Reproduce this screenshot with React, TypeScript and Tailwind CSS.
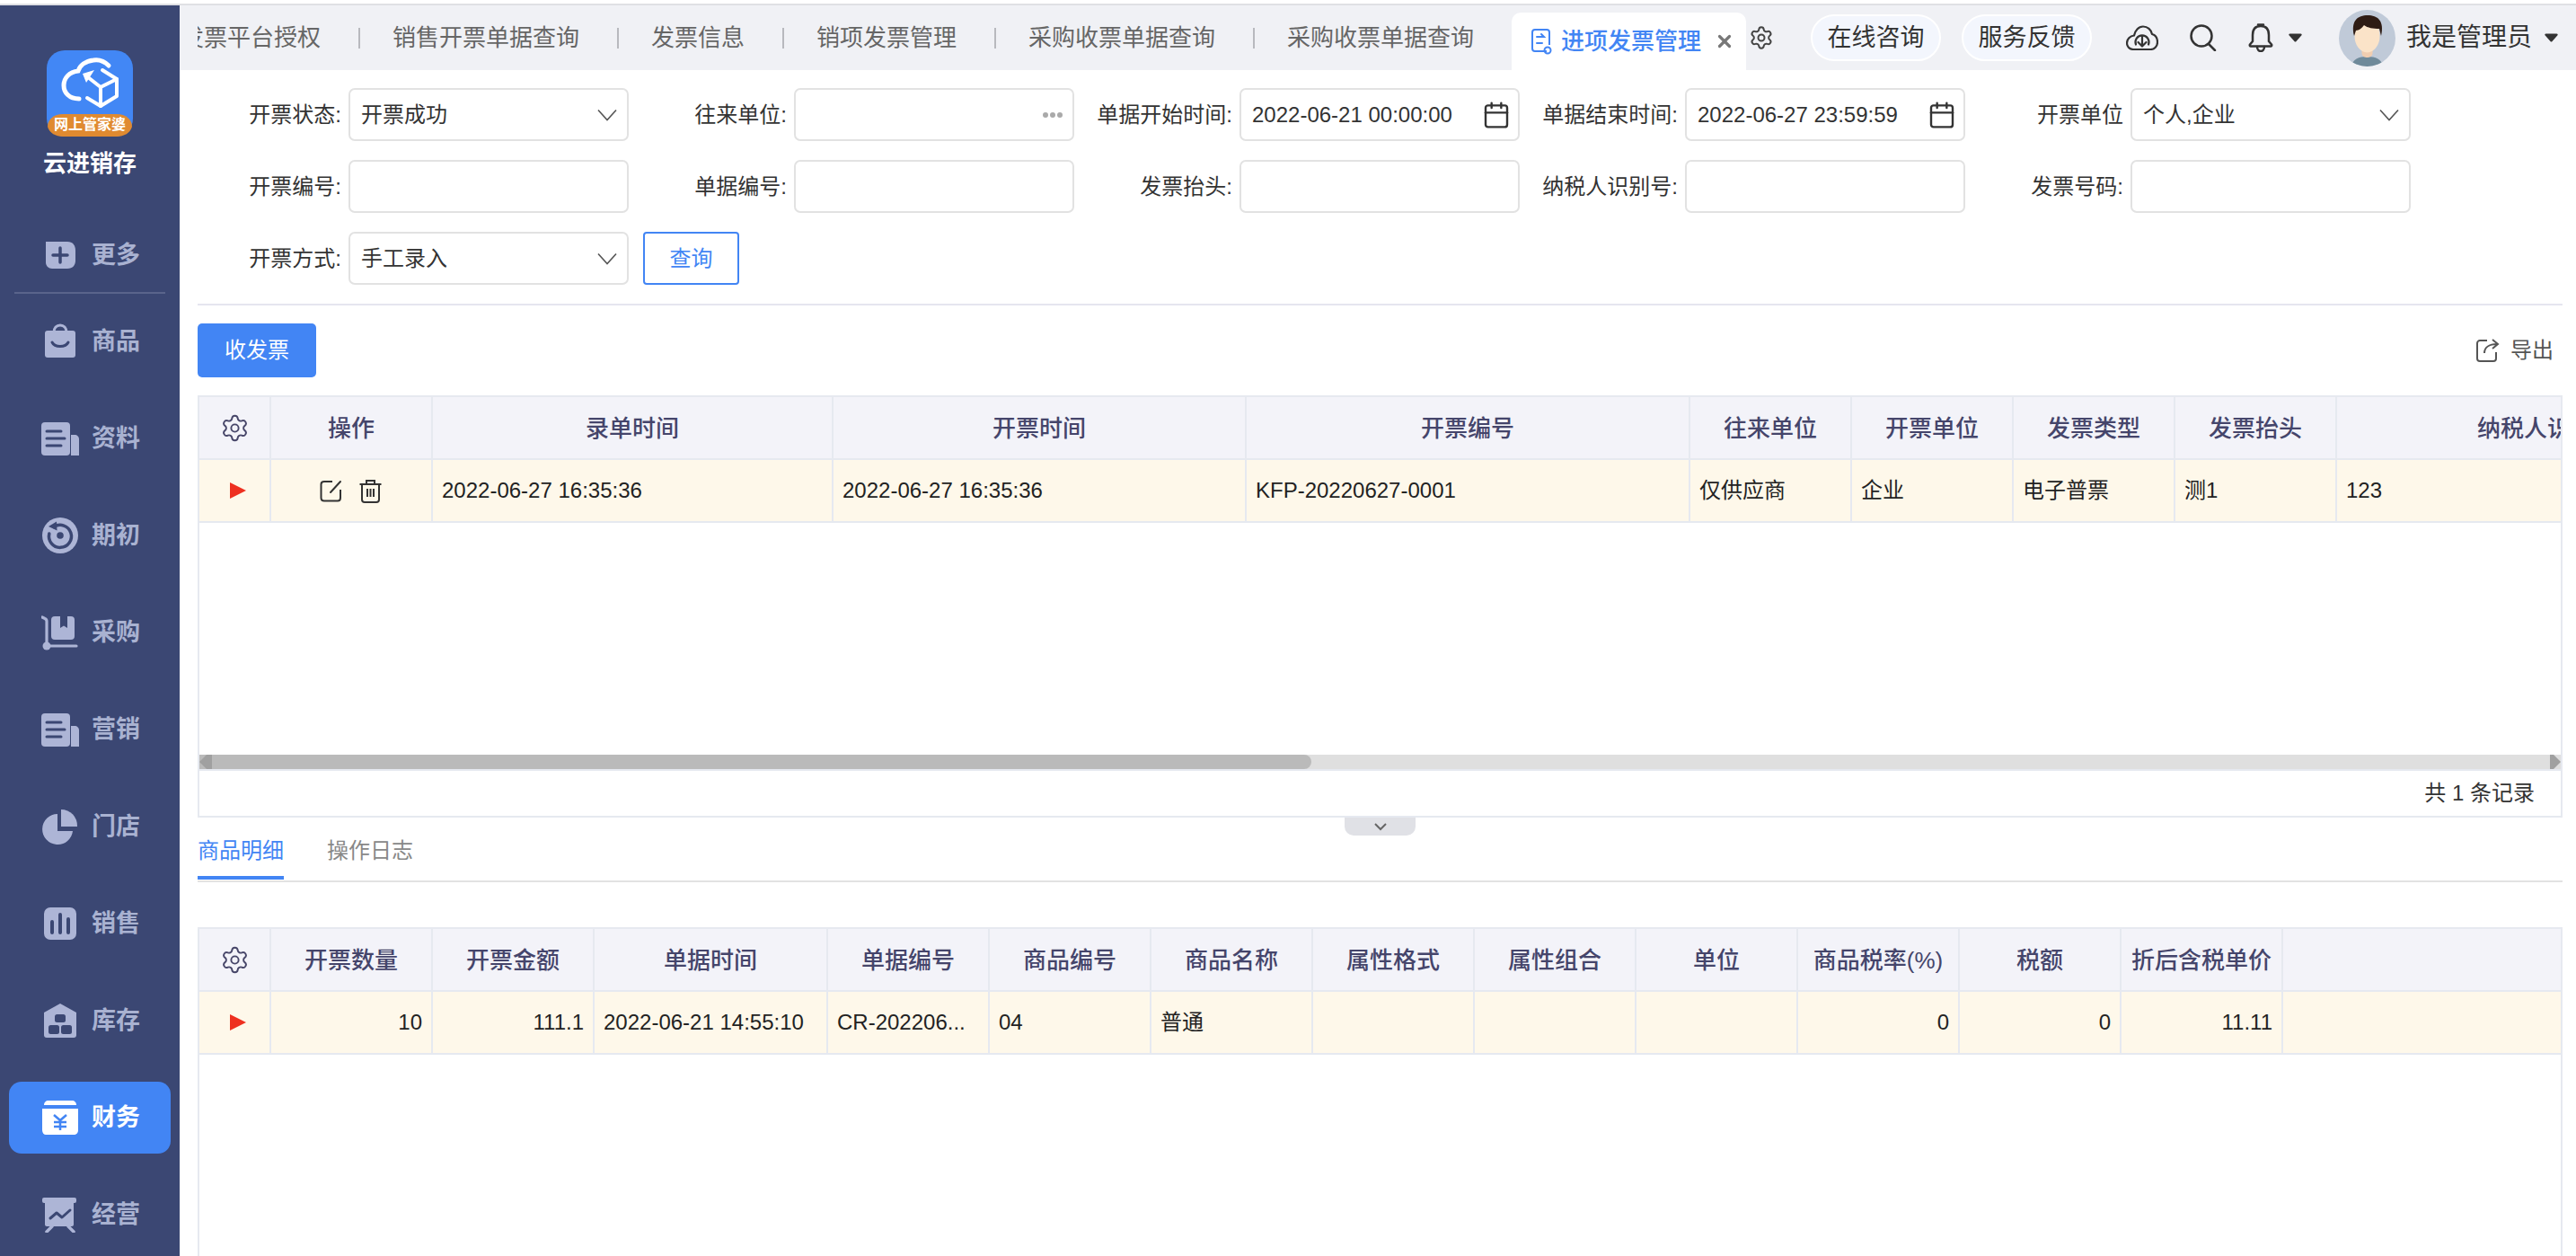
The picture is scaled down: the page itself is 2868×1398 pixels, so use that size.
import React from "react";
import { Settings, Calendar, X } from "lucide-react";

const FONT = "font-['Liberation_Sans','Noto_Sans_CJK_SC',sans-serif]";

const IC = "#adb5d6";
const BG = "#3b4773";

function Ico({ children, w = 42, h = 40 }: { children: React.ReactNode; w?: number; h?: number }) {
  return (
    <svg width={w} height={h} viewBox="0 0 42 40" className="shrink-0">
      {children}
    </svg>
  );
}

const IconMore = () => (
  <Ico>
    <path d="M5 5h24c6 0 9 4 9 10v11c0 5-3 9-9 9H12c-4 0-7-3-7-7z" fill={IC} />
    <path d="M21 12v16M13 20h16" stroke={BG} strokeWidth="3.5" strokeLinecap="round" />
  </Ico>
);
const IconBag = () => (
  <Ico>
    <path d="M14 10c0-5 3-8 7-8s7 3 7 8" fill="none" stroke={IC} strokeWidth="3" />
    <rect x="4" y="8" width="34" height="30" rx="3" fill={IC} />
    <path d="M12 21c3 6 15 6 18 0" fill="none" stroke={BG} strokeWidth="3" strokeLinecap="round" />
  </Ico>
);
const IconDoc = () => (
  <Ico>
    <rect x="0" y="2" width="32" height="37" rx="4" fill={IC} />
    <path d="M33 16h4c3 0 5 2 5 5v18h-9z" fill={IC} />
    <path d="M6 12h16M6 20h20M6 28h16" stroke={BG} strokeWidth="3" strokeLinecap="round" />
  </Ico>
);
const IconDisc = () => (
  <Ico>
    <circle cx="21" cy="20" r="20" fill={IC} />
    <path d="M14 10.500A12.500 12.500 0 1 1 8.800 18" fill="none" stroke={BG} strokeWidth="3.5" strokeLinecap="round" />
    <path d="M8 10l9-5.500.5 10z" fill={BG} />
    <circle cx="21" cy="20" r="3.800" fill={BG} />
  </Ico>
);
const IconCart = () => (
  <Ico>
    <path d="M1 3l3 1.500c1.500.700 2 1.500 2 3V35" fill="none" stroke={IC} strokeWidth="3.200" strokeLinecap="round" />
    <circle cx="6" cy="35" r="4.500" fill={IC} />
    <path d="M6 35h33" stroke={IC} strokeWidth="3.200" strokeLinecap="round" />
    <rect x="11" y="2" width="26" height="26" rx="4" fill={IC} />
    <path d="M21 2v13l4-2.500 4 2.500V2z" fill={BG} />
  </Ico>
);
const IconPie = () => (
  <Ico>
    <path d="M18 6a17 17 0 1 0 17 19H18z" fill={IC} />
    <path d="M22 1a18 18 0 0 1 18 19H22z" fill={IC} />
  </Ico>
);
const IconBars = () => (
  <Ico>
    <rect x="3" y="2" width="36" height="36" rx="7" fill={IC} />
    <path d="M12 18v12M21 10v20M30 15v15" stroke={BG} strokeWidth="4" strokeLinecap="round" />
  </Ico>
);
const IconHouse = () => (
  <Ico>
    <path d="M21 1 39 11v25c0 2-1 3-3 3H6c-2 0-3-1-3-3V11z" fill={IC} />
    <rect x="15" y="13" width="12" height="9" rx="2.500" fill={BG} />
    <rect x="8" y="25" width="12" height="10" rx="2.500" fill={BG} />
    <rect x="22" y="25" width="12" height="10" rx="2.500" fill={BG} />
  </Ico>
);
const IconWallet = () => (
  <Ico>
    <path d="M3 6c0-3 2-5 5-5h26c3 0 5 2 5 5z" fill="#fff" />
    <path d="M1 10h40v24c0 3-2 5-5 5H5c-2 0-4-2-4-5z" fill="#fff" />
    <path d="M14 17l7 6 7-6M21 23v11M14 25h14M14 30h14" fill="none" stroke="#4285f4" strokeWidth="2.500" />
  </Ico>
);
const IconBoard = () => (
  <Ico>
    <rect x="1" y="1" width="38" height="6" rx="2" fill={IC} />
    <path d="M4 7h32v24c0 1-1 2-2 2H6c-1 0-2-1-2-2z" fill={IC} />
    <path d="M10 24l7-6 6 5 9-8" fill="none" stroke={BG} strokeWidth="3" strokeLinecap="round" strokeLinejoin="round" />
    <path d="M12 33 6 39M30 33l6 6" stroke={IC} strokeWidth="3.500" strokeLinecap="round" />
  </Ico>
);

function NavItem({ icon, label, active }: { icon: React.ReactNode; label: string; active?: boolean }) {
  return (
    <div
      className={`mx-[10px] flex h-[80px] w-[180px] items-center rounded-[14px] pl-[36px] ${
        active ? "bg-[#4285f4] text-white" : "text-[#a9b2d1]"
      }`}
    >
      <div className="flex w-[42px] items-center justify-center">{icon}</div>
      <span className="ml-[14px] text-[27px] leading-none font-bold">{label}</span>
    </div>
  );
}

function Logo() {
  return (
    <div className="relative mx-auto h-[96px] w-[96px]">
      <svg width="96" height="96" viewBox="0 0 96 96" className="block">
        <rect width="96" height="96" rx="20" fill="#4287f5" />
        <path d="M1 85C1 77 8 71 18 71H78C88 71 95 77 95 85 93 92 86 96 78 96H18C10 96 3 92 1 85Z" fill="#e08a30" />
        <path
          d="M69 17C64 12 58 10 52 11 43 12 37 17 35 23 25 24 19 31 19 39 19 47 25 54 36 54"
          fill="none"
          stroke="#fff"
          strokeWidth="5"
          strokeLinecap="round"
        />
        <path d="M62 22 78 32V51L60 62 45 53" fill="none" stroke="#fff" strokeWidth="4" strokeLinejoin="round" strokeLinecap="round" />
        <path d="M78 32 60 41V62M60 41 46 30" fill="none" stroke="#fff" strokeWidth="4" strokeLinecap="round" />
        <path d="M40 26 53 22 44 36z" fill="#fff" />
      </svg>
      <span className="absolute top-[71px] left-0 w-full text-center text-[16px] leading-[23px] font-bold text-white">
        网上管家婆
      </span>
    </div>
  );
}

function Sidebar() {
  return (
    <aside className="flex h-full w-[200px] shrink-0 flex-col bg-[#3b4773] pt-[50px]">
      <Logo />
      <div className="mt-[12px] text-center text-[26px] leading-[36px] font-bold text-white">云进销存</div>
      <div className="mt-[44px]">
        <NavItem icon={<IconMore />} label="更多" />
      </div>
      <div className="mx-[16px] mt-[1px] h-[2px] bg-[#5a648b]" />
      <div className="mt-[13px] flex flex-col gap-[28px]">
        <NavItem icon={<IconBag />} label="商品" />
        <NavItem icon={<IconDoc />} label="资料" />
        <NavItem icon={<IconDisc />} label="期初" />
        <NavItem icon={<IconCart />} label="采购" />
        <NavItem icon={<IconDoc />} label="营销" />
        <NavItem icon={<IconPie />} label="门店" />
        <NavItem icon={<IconBars />} label="销售" />
        <NavItem icon={<IconHouse />} label="库存" />
        <NavItem icon={<IconWallet />} label="财务" active />
        <NavItem icon={<IconBoard />} label="经营" />
      </div>
    </aside>
  );
}

const Caret = () => (
  <svg width="15" height="10" viewBox="0 0 15 10" className="shrink-0">
    <path d="M1.500 .500h12c1 0 1.500 1 1 1.800L8.500 9c-.5.700-1.500.700-2 0L.5 2.300C0 1.500.5.500 1.500.500z" fill="#333" />
  </svg>
);

function Avatar() {
  return (
    <svg width="63" height="63" viewBox="0 0 63 63" className="shrink-0">
      <defs>
        <clipPath id="av">
          <circle cx="31.500" cy="31.500" r="31.500" />
        </clipPath>
      </defs>
      <g clipPath="url(#av)">
        <rect width="63" height="63" fill="#c0cad8" />
        <path d="M14 63c1-8 8-11 17.500-11S48 55 49 63z" fill="#6f8a9a" />
        <rect x="25.500" y="40" width="12" height="13" rx="5" fill="#f0cdb0" />
        <ellipse cx="31.500" cy="29" rx="14" ry="18.500" fill="#fbe3c8" />
        <path d="M17 29C13 12 21 6 32 6s19 6 15 23l-2-8c-7 0-13-1-17-4-2 3-6 6-9 6z" fill="#2e1c14" />
      </g>
    </svg>
  );
}

function TabSep() {
  return <span className="h-[23px] w-[2px] shrink-0 bg-[#b8b9be]" />;
}

function TopBar() {
  const tabs = ["发票平台授权", "销售开票单据查询", "发票信息", "销项发票管理", "采购收票单据查询", "采购收票单据查询"];
  return (
    <div className="flex h-[72px] shrink-0 items-end bg-[#f0f1f5]">
      <div className="ml-[20px] flex h-[72px] w-[1463px] items-center overflow-hidden">
        <div className="-ml-[19px] flex items-center">
          {tabs.map((t, i) => (
            <React.Fragment key={i}>
              <span className={`shrink-0 pr-[42px] text-[26px] leading-[36px] whitespace-nowrap text-[#666] ${i === 0 ? "pl-0" : "pl-[36px]"}`}>
                {t}
              </span>
              {i < 5 && <TabSep />}
            </React.Fragment>
          ))}
        </div>
      </div>
      <div className="flex h-[64px] w-[261px] shrink-0 items-center rounded-t-[10px] bg-white pl-[21px]">
        <svg width="24" height="32" viewBox="0 0 24 32" className="shrink-0" fill="none" stroke="#4285f4" strokeWidth="2">
          <path d="M18 27H5c-2 0-3-1-3-3V6c0-2 1-3 3-3h13c2 0 3 1 3 3v14" />
          <path d="M7 11h8l-3-3M7 18h6" strokeLinecap="round" />
          <circle cx="19" cy="26" r="3.500" />
        </svg>
        <span className="ml-[10px] text-[26px] leading-none font-medium whitespace-nowrap text-[#4285f4]">进项发票管理</span>
        <X className="ml-[15px] shrink-0 text-[#777]" size={22} strokeWidth={3.500} />
      </div>
      <div className="flex h-[72px] flex-1 items-center">
        <Settings className="ml-[3px] shrink-0 text-[#444]" size={28} strokeWidth={1.700} />
        <div className="ml-[41px] flex h-[52px] w-[145px] items-center justify-center rounded-full border-2 border-white bg-[#f3f6fd] text-[27px] leading-none text-[#333]">
          在线咨询
        </div>
        <div className="ml-[23px] flex h-[52px] w-[145px] items-center justify-center rounded-full border-2 border-white bg-[#f3f6fd] text-[27px] leading-none text-[#333]">
          服务反馈
        </div>
        <svg width="36" height="28" viewBox="0 0 36 28" fill="none" stroke="#333" strokeWidth="2.200" className="ml-[38px] shrink-0">
          <path d="M8 27C3.500 27 1 23.500 1 20c0-4.500 3.500-8 8-8.500C10 6 14 1.500 19 1.500c5 0 9 3.500 10 8.500 4 1 6 5 6 9 0 4.500-3.500 8-7.500 8z" strokeLinejoin="round" />
          <path d="M11 21.500A7.500 7.500 0 1 1 25 21.500" strokeLinecap="round" />
          <path d="M18 12v11M13.500 19l4.500 4.500 4.500-4.500" strokeLinecap="round" strokeLinejoin="round" />
        </svg>
        <svg width="30" height="30" viewBox="0 0 30 30" fill="none" stroke="#333" strokeWidth="2.500" className="ml-[35px] shrink-0">
          <circle cx="13" cy="13" r="11.500" />
          <path d="M21 22l7 7" strokeLinecap="round" />
        </svg>
        <svg width="28" height="32" viewBox="0 0 28 32" fill="none" stroke="#333" strokeWidth="2.500" className="ml-[35px] shrink-0" strokeLinejoin="round">
          <path d="M14 3c-6 0-9 4-9 10v7l-3 3.500c-.700 1 0 2 1 2h22c1 0 1.700-1 1-2L23 20v-7c0-6-3-10-9-10z" />
          <path d="M11 1.500h6M10 26c0 3 2 5 4 5s4-2 4-5" strokeLinecap="round" />
        </svg>
        <div className="ml-[17px] flex">
          <Caret />
        </div>
        <div className="ml-[41px] flex">
          <Avatar />
        </div>
        <span className="ml-[12px] text-[28px] leading-none whitespace-nowrap text-[#333]">我是管理员</span>
        <div className="ml-[14px] flex">
          <Caret />
        </div>
      </div>
    </div>
  );
}

const Chevron = () => (
  <svg width="22" height="14" viewBox="0 0 22 14" fill="none" stroke="#555" strokeWidth="1.600" className="shrink-0">
    <path d="M1 1.500 11 12.500 21 1.500" />
  </svg>
);

function Field({ label, value, kind }: { label: string; value?: string; kind?: "select" | "more" | "date" }) {
  return (
    <div className="flex h-[59px] w-[496px] shrink-0 items-center">
      <span className="w-[160px] shrink-0 text-right text-[24px] leading-none whitespace-nowrap text-[#333]">{label}</span>
      <div className="ml-[8px] flex h-[59px] w-[312px] shrink-0 items-center rounded-[7px] border-2 border-[#e2e2e2] pr-[11px] pl-[12px]">
        <span className="flex-1 text-[24px] leading-none whitespace-nowrap text-[#333]">{value}</span>
        {kind === "select" && <Chevron />}
        {kind === "date" && <Calendar className="mr-[-3px] shrink-0 text-[#333]" size={32} strokeWidth={1.800} />}
        {kind === "more" && (
          <span className="flex gap-[2px]">
            <i className="h-[6px] w-[6px] rounded-full bg-[#aaa]" />
            <i className="h-[6px] w-[6px] rounded-full bg-[#aaa]" />
            <i className="h-[6px] w-[6px] rounded-full bg-[#aaa]" />
          </span>
        )}
      </div>
    </div>
  );
}

function QueryForm() {
  return (
    <div className="flex flex-col gap-[21px] pt-[20px]">
      <div className="flex">
        <Field label="开票状态:" value="开票成功" kind="select" />
        <Field label="往来单位:" kind="more" />
        <Field label="单据开始时间:" value="2022-06-21 00:00:00" kind="date" />
        <Field label="单据结束时间:" value="2022-06-27 23:59:59" kind="date" />
        <Field label="开票单位" value="个人,企业" kind="select" />
      </div>
      <div className="flex">
        <Field label="开票编号:" />
        <Field label="单据编号:" />
        <Field label="发票抬头:" />
        <Field label="纳税人识别号:" />
        <Field label="发票号码:" />
      </div>
      <div className="flex">
        <Field label="开票方式:" value="手工录入" kind="select" />
        <button className="h-[59px] w-[107px] shrink-0 rounded-[4px] border-2 border-[#4285f4] text-[24px] text-[#4285f4]">查询</button>
      </div>
    </div>
  );
}

const RedArrow = () => (
  <svg width="18" height="18" viewBox="0 0 18 18" className="ml-[8px]">
    <path d="M0 0 18 9 0 18z" fill="#ee3020" />
  </svg>
);

function GearCell() {
  return (
    <div className="flex h-full w-[80px] shrink-0 items-center justify-center border-r-2 border-[#e6e9f0]">
      <Settings className="text-[#474669]" size={33} strokeWidth={1.400} />
    </div>
  );
}

type Col = { w: string; title?: string; value?: React.ReactNode; align?: "l" | "r" | "c" };

function Grid({ cols }: { cols: Col[] }) {
  return (
    <>
      <div className="flex h-[70px] shrink-0 border-b-2 border-[#e6e9f0] bg-[#f3f3f9]">
        <GearCell />
        {cols.map((c, i) => (
          <div
            key={i}
            className={`flex h-full shrink-0 items-center justify-center border-r-2 border-[#e6e9f0] pt-[2px] text-[26px] leading-none font-medium whitespace-nowrap text-[#45456b] ${c.w}`}
          >
            {c.title}
          </div>
        ))}
        <div className="flex-1" />
      </div>
      <div className="flex h-[70px] shrink-0 border-b-2 border-[#e6e9f0] bg-[#fef8ea]">
        <div className="flex h-full w-[80px] shrink-0 items-center justify-center border-r-2 border-[#e6e9f0]">
          <RedArrow />
        </div>
        {cols.map((c, i) => (
          <div
            key={i}
            className={`flex h-full shrink-0 items-center overflow-hidden border-r-2 border-[#e6e9f0] px-[10px] text-[24px] leading-none whitespace-nowrap text-[#222] ${c.w} ${
              c.align === "r" ? "justify-end" : c.align === "c" ? "justify-center" : "justify-start"
            }`}
          >
            {c.value}
          </div>
        ))}
        <div className="flex-1" />
      </div>
    </>
  );
}

const ActionIcons = () => (
  <span className="flex items-center gap-[19px] pr-[1px]">
    <svg width="25" height="25" viewBox="0 0 25 25" fill="none" stroke="#333" strokeWidth="2">
      <path d="M14 2H5C3 2 1.500 3 1.500 5v15c0 2 1.500 3.500 3.500 3.500h15c2 0 3-1.500 3-3.500v-9" />
      <path d="M12 14 23 2" strokeLinecap="round" />
    </svg>
    <svg width="25" height="27" viewBox="0 0 25 27" fill="none" stroke="#333" strokeWidth="2">
      <path d="M0.500 6h24M8 5V2h9v3" />
      <path d="M3 6v17c0 2 1 3 3 3h13c2 0 3-1 3-3V6M9 11v9M16 11v9M12.500 11v9" />
    </svg>
  </span>
);

function ScrollBar() {
  return (
    <div className="flex h-[16px] shrink-0 bg-[#dfdfdf]">
      <div className="flex h-full w-[1238px] items-center rounded-r-[8px] bg-[#bababa]">
        <svg width="14" height="16" viewBox="0 0 14 16">
          <path d="M14 0v16H8L0 8l8-8z" fill="#a0a0a0" />
        </svg>
      </div>
      <div className="flex-1" />
      <svg width="12" height="16" viewBox="0 0 12 16">
        <path d="M0 0h4l8 8-8 8H0z" fill="#a0a0a0" />
      </svg>
    </div>
  );
}

function MainTable() {
  const cols: Col[] = [
    { w: "w-[180px]", title: "操作", value: <ActionIcons />, align: "c" },
    { w: "w-[446px]", title: "录单时间", value: "2022-06-27 16:35:36" },
    { w: "w-[460px]", title: "开票时间", value: "2022-06-27 16:35:36" },
    { w: "w-[494px]", title: "开票编号", value: "KFP-20220627-0001" },
    { w: "w-[180px]", title: "往来单位", value: "仅供应商" },
    { w: "w-[180px]", title: "开票单位", value: "企业" },
    { w: "w-[180px]", title: "发票类型", value: "电子普票" },
    { w: "w-[180px]", title: "发票抬头", value: "测1" },
    { w: "w-[470px]", title: "纳税人识别号", value: "123" },
  ];
  return (
    <div className="mt-[20px] flex h-[470px] shrink-0 flex-col overflow-hidden border-2 border-[#e6e9f0]">
      <Grid cols={cols} />
      <div className="flex-1" />
      <ScrollBar />
      <div className="h-[2px] shrink-0 bg-[#e6e9f0]" />
      <div className="flex h-[50px] shrink-0 items-center justify-end pr-[29px] text-[24px] leading-none text-[#333]">共 1 条记录</div>
    </div>
  );
}

function DetailTable() {
  const cols: Col[] = [
    { w: "w-[180px]", title: "开票数量", value: "10", align: "r" },
    { w: "w-[180px]", title: "开票金额", value: "111.1", align: "r" },
    { w: "w-[260px]", title: "单据时间", value: "2022-06-21 14:55:10" },
    { w: "w-[180px]", title: "单据编号", value: "CR-202206..." },
    { w: "w-[180px]", title: "商品编号", value: "04" },
    { w: "w-[180px]", title: "商品名称", value: "普通" },
    { w: "w-[180px]", title: "属性格式" },
    { w: "w-[180px]", title: "属性组合" },
    { w: "w-[180px]", title: "单位" },
    { w: "w-[180px]", title: "商品税率(%)", value: "0", align: "r" },
    { w: "w-[180px]", title: "税额", value: "0", align: "r" },
    { w: "w-[180px]", title: "折后含税单价", value: "11.11", align: "r" },
  ];
  return (
    <div className="mt-[50px] flex min-h-0 flex-1 flex-col overflow-hidden border-x-2 border-t-2 border-[#e6e9f0]">
      <Grid cols={cols} />
    </div>
  );
}

export default function App() {
  return (
    <div className={`flex h-[1398px] w-[2868px] flex-col overflow-hidden bg-white ${FONT}`}>
      <div className="h-[4px] shrink-0 bg-white" />
      <div className="h-[2px] shrink-0 bg-[#dfe0e4]" />
      <div className="flex min-h-0 flex-1">
        <Sidebar />
        <main className="flex min-w-0 flex-1 flex-col">
          <TopBar />
          <div className="flex min-h-0 flex-1 flex-col pr-[15px] pl-[20px]">
            <QueryForm />
            <div className="mt-[21px] h-[2px] shrink-0 bg-[#e5e5ef]" />
            <div className="mt-[20px] flex h-[60px] shrink-0 items-start justify-between">
              <button className="h-[60px] w-[132px] rounded-[5px] bg-[#4285f4] text-[24px] text-white">收发票</button>
              <div className="flex items-center gap-[12px] pt-[16px] pr-[10px] text-[24px] leading-none text-[#555]">
                <svg width="26" height="28" viewBox="0 0 26 28" fill="none" stroke="#555" strokeWidth="2">
                  <path d="M12 3H4C2.500 3 1 4.500 1 6v17c0 2 1.500 3 3 3h15c2 0 3-1 3-3v-7" />
                  <path d="M9 17c0-6 5-10 14-10M18 2l6 5-6 5" />
                </svg>
                导出
              </div>
            </div>
            <MainTable />
            <div className="flex h-[20px] shrink-0 justify-center">
              <div className="flex h-[20px] w-[79px] items-center justify-center rounded-b-[10px] bg-[#e0e1e6]">
                <svg width="14" height="9" viewBox="0 0 14 9" fill="none" stroke="#666" strokeWidth="2">
                  <path d="M1 1l6 6 6-6" />
                </svg>
              </div>
            </div>
            <div className="flex h-[52px] shrink-0 border-b-2 border-[#e2e2e2]">
              <div className="flex h-[49px] w-[96px] items-center border-b-4 border-[#4285f4] pb-[11px] text-[24px] leading-none whitespace-nowrap text-[#4285f4]">
                商品明细
              </div>
              <div className="ml-[48px] flex h-[49px] items-center pb-[15px] text-[24px] leading-none whitespace-nowrap text-[#888]">
                操作日志
              </div>
            </div>
            <DetailTable />
          </div>
        </main>
      </div>
    </div>
  );
}
